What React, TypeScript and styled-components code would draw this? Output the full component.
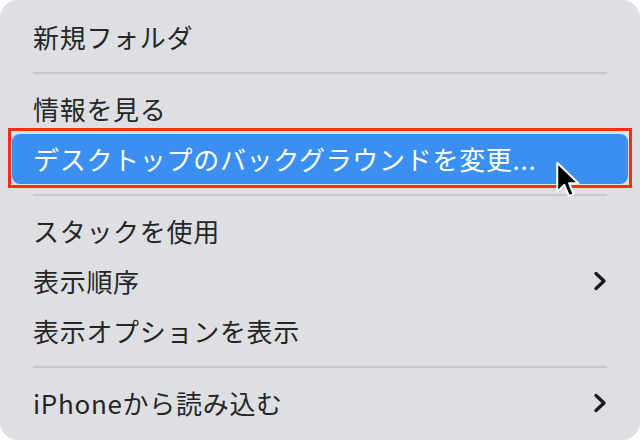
import styled, { createGlobalStyle } from "styled-components";

const GlobalStyle = createGlobalStyle`
  html, body {
    margin: 0;
    padding: 0;
    background: #ffffff;
  }
`;

const colors = {
  menu: "#dedfe2",
  text: "#262626",
  separator: "#c7c9cc",
  highlight: "#3a8ff0",
  annotation: "#ff2d17",
};

const Menu = styled.div`
  position: relative;
  width: 640px;
  height: 440px;
  box-sizing: border-box;
  padding-top: 12px;
  background: ${colors.menu};
  border-radius: 18px;
  overflow: hidden;
  font-family: "Noto Sans CJK JP", "Noto Sans", sans-serif;
`;

const Item = styled.div<{ $active?: boolean }>`
  position: relative;
  display: flex;
  align-items: center;
  justify-content: space-between;
  height: 50px;
  margin: 0 12px;
  padding: 0 21px;
  border-radius: 8px;
  font-size: 26px;
  line-height: 1;
  letter-spacing: 0.7px;
  color: ${({ $active }) => ($active ? "#ffffff" : colors.text)};
  background: ${({ $active }) => ($active ? colors.highlight : "transparent")};

  /* red annotation frame drawn over the selected row */
  &::before {
    content: "";
    display: ${({ $active }) => ($active ? "block" : "none")};
    position: absolute;
    left: -4px;
    right: -4px;
    top: -6px;
    bottom: -4px;
    border: 3px solid ${colors.annotation};
  }
`;

const Separator = styled.div`
  display: flex;
  align-items: center;
  height: 22px;
  margin: 0 33px;

  &::after {
    content: "";
    flex: 1;
    height: 2px;
    background: ${colors.separator};
  }
`;

const Chevron = () => (
  <svg width="14" height="22" viewBox="0 0 14 22">
    <polyline
      points="3,3.5 11,11 3,18.5"
      fill="none"
      stroke="#1c1c1c"
      strokeWidth="3.4"
      strokeLinecap="round"
      strokeLinejoin="round"
    />
  </svg>
);

const Cursor = styled.svg`
  position: absolute;
  left: 555px;
  top: 161px;
`;

const entries: ({ label: string; submenu?: boolean; active?: boolean } | "sep")[] = [
  { label: "新規フォルダ" },
  "sep",
  { label: "情報を見る" },
  { label: "デスクトップのバックグラウンドを変更...", active: true },
  "sep",
  { label: "スタックを使用" },
  { label: "表示順序", submenu: true },
  { label: "表示オプションを表示" },
  "sep",
  { label: "iPhoneから読み込む", submenu: true },
];

export default function App() {
  return (
    <>
      <GlobalStyle />
      <Menu>
        {entries.map((entry, i) =>
          entry === "sep" ? (
            <Separator key={i} />
          ) : (
            <Item key={i} $active={entry.active}>
              <span>{entry.label}</span>
              {entry.submenu && <Chevron />}
            </Item>
          )
        )}
        <Cursor width="26" height="39" viewBox="0 0 14 21">
          <path
            d="M1.2 1 L1.2 16.5 L5 12.9 L7.5 18.9 L10 17.8 L7.6 12 L12.6 12 Z"
            fill="#000"
            stroke="#fff"
            strokeWidth="1.1"
            strokeLinejoin="round"
          />
        </Cursor>
      </Menu>
    </>
  );
}
